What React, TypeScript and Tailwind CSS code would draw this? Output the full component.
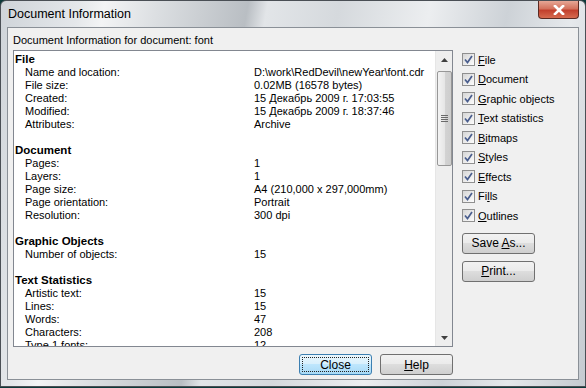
import { Fragment } from 'react';

type Row = { label: string; value?: string; header?: boolean; blank?: boolean };

const rows: Row[] = [
  { label: 'File', header: true },
  { label: 'Name and location:', value: 'D:\\work\\RedDevil\\newYear\\font.cdr' },
  { label: 'File size:', value: '0.02MB (16578 bytes)' },
  { label: 'Created:', value: '15 Декабрь 2009 г. 17:03:55' },
  { label: 'Modified:', value: '15 Декабрь 2009 г. 18:37:46' },
  { label: 'Attributes:', value: 'Archive' },
  { label: '', blank: true },
  { label: 'Document', header: true },
  { label: 'Pages:', value: '1' },
  { label: 'Layers:', value: '1' },
  { label: 'Page size:', value: 'A4 (210,000 x 297,000mm)' },
  { label: 'Page orientation:', value: 'Portrait' },
  { label: 'Resolution:', value: '300 dpi' },
  { label: '', blank: true },
  { label: 'Graphic Objects', header: true },
  { label: 'Number of objects:', value: '15' },
  { label: '', blank: true },
  { label: 'Text Statistics', header: true },
  { label: 'Artistic text:', value: '15' },
  { label: 'Lines:', value: '15' },
  { label: 'Words:', value: '47' },
  { label: 'Characters:', value: '208' },
  { label: 'Type 1 fonts:', value: '12' },
];

// label split into [before, accelerator, after]
const checks: [string, string, string][] = [
  ['', 'F', 'ile'],
  ['', 'D', 'ocument'],
  ['', 'G', 'raphic objects'],
  ['', 'T', 'ext statistics'],
  ['', 'B', 'itmaps'],
  ['', 'S', 'tyles'],
  ['', 'E', 'ffects'],
  ['Fi', 'l', 'ls'],
  ['', 'O', 'utlines'],
];

function CheckBox() {
  return (
    <div className="w-[13px] h-[13px] border border-[#8f8f8f] bg-[linear-gradient(135deg,#d6d6d6,#fdfdfd)] p-[1px] flex items-center justify-center">
      <svg width="9" height="9" viewBox="0 0 9 9">
        <path d="M1 4.5 L3.5 7.5 L8 1" fill="none" stroke="#4a5e8e" strokeWidth="1.7" />
      </svg>
    </div>
  );
}

function Button({ pre = '', acc = '', post = '', w = 'w-[73px]' }: { pre?: string; acc?: string; post?: string; w?: string }) {
  return (
    <div
      className={`${w} h-[21px] rounded-[3px] border border-[#707070] bg-[linear-gradient(#f2f2f2,#ebebeb_45%,#dddddd_50%,#cfcfcf)] flex items-center justify-center text-[12px] text-black`}
    >
      <span>
        {pre}
        {acc && <span className="underline">{acc}</span>}
        {post}
      </span>
    </div>
  );
}

export default function App() {
  return (
    <div className="w-[586px] h-[388px] overflow-hidden bg-[#0d3a3a] font-['Liberation_Sans',Arial,sans-serif]">
      <div className="w-[586px] h-[387px] rounded-t-[6px] border border-[#4a4f55] bg-[linear-gradient(100deg,#cfd4d9_0%,#e4e7ea_12%,#f3f4f5_16%,#dcdfe2_24%,#b9bec3_38%,#e2e5e8_41%,#d5d9dd_52%,#eceef0_66%,#cdd2d7_78%,#e6e9ec_88%,#c4cad0_100%)] flex flex-col">
        {/* Title bar */}
        <div className="h-[26px] flex items-start justify-between">
          <div className="pl-[7px] pt-[6px] text-[12.5px] leading-[15px] text-black">Document Information</div>
          <div className="mr-[6px] w-[41px] h-[18px] rounded-b-[4px] border border-t-0 border-[#5a2a22] bg-[linear-gradient(#e6a796,#d3725d_45%,#c2402d_55%,#d66b4f)] flex items-center justify-center">
            <svg width="12" height="10" viewBox="0 0 12 10">
              <path d="M2 1 L10 9 M10 1 L2 9" stroke="#fff" strokeWidth="2.6" strokeLinecap="square" />
            </svg>
          </div>
        </div>

        {/* Client area */}
        <div className="mx-[6px] h-[353px] border border-[#8a9097] bg-[#f0f0f0] px-[5px] text-black">
          <div className="pt-[6px] h-[22px] text-[11px] leading-[13px]">Document Information for document: font</div>

          <div className="flex">
            {/* List */}
            <div className="w-[440px] h-[297px] border border-[#828790] bg-white flex overflow-hidden">
              <div className="flex-1 pt-[2px] text-[11px] leading-[13px] overflow-hidden">
                {rows.map((r, i) => (
                  <Fragment key={i}>
                    {r.blank ? (
                      <div className="h-[13px]" />
                    ) : r.header ? (
                      <div className="h-[13px] pl-[1px] font-bold text-[11.5px]">{r.label}</div>
                    ) : (
                      <div className="h-[13px] flex whitespace-nowrap">
                        <div className="w-[240px] pl-[11px]">{r.label}</div>
                        <div>{r.value}</div>
                      </div>
                    )}
                  </Fragment>
                ))}
              </div>
              {/* Scrollbar */}
              <div className="w-[17px] bg-[#eeeeee] border-l border-[#e6e6e6] flex flex-col items-center">
                <div className="h-[17px] w-full flex items-center justify-center">
                  <svg width="7" height="4" viewBox="0 0 7 4">
                    <path d="M0 4 L3.5 0 L7 4 Z" fill="#404040" />
                  </svg>
                </div>
                <div className="mt-[3px] w-[15px] h-[95px] rounded-[2px] border border-[#979797] bg-[linear-gradient(90deg,#f3f3f3,#e6e6e6_50%,#d3d3d3_51%,#cdcdcd)] flex items-center justify-center">
                  <svg width="7" height="7" viewBox="0 0 7 7">
                    <path d="M0 0.5 H7 M0 2.5 H7 M0 4.5 H7 M0 6.5 H7" stroke="#6a6a6a" strokeWidth="1" />
                  </svg>
                </div>
                <div className="flex-1" />
                <div className="h-[17px] w-full flex items-center justify-center">
                  <svg width="7" height="4" viewBox="0 0 7 4">
                    <path d="M0 0 L3.5 4 L7 0 Z" fill="#404040" />
                  </svg>
                </div>
              </div>
            </div>

            {/* Options */}
            <div className="ml-[9px] flex flex-col">
              {checks.map(([pre, acc, post]) => (
                <div key={acc + post} className="h-[19.5px] flex items-center gap-[3px] text-[11px]">
                  <CheckBox />
                  <span>
                    {pre}
                    <span className="underline">{acc}</span>
                    {post}
                  </span>
                </div>
              ))}
              <div className="mt-[7px] flex flex-col gap-[7px]">
                <Button pre="Save " acc="A" post="s..." />
                <Button acc="P" post="rint..." />
              </div>
            </div>
          </div>

          {/* Bottom buttons */}
          <div className="mt-[7px] ml-[286px] flex gap-[8px]">
            <div className="w-[73px] h-[21px] rounded-[3px] border border-[#3c7fb1] bg-[linear-gradient(#eaf6fd,#d9f0fc_45%,#bee6fd_50%,#a7d9f5)] p-[2px]">
              <div className="w-full h-full border border-dotted border-[#222] flex items-center justify-center text-[12px]">Close</div>
            </div>
            <Button acc="H" post="elp" />
          </div>
        </div>
      </div>
    </div>
  );
}
